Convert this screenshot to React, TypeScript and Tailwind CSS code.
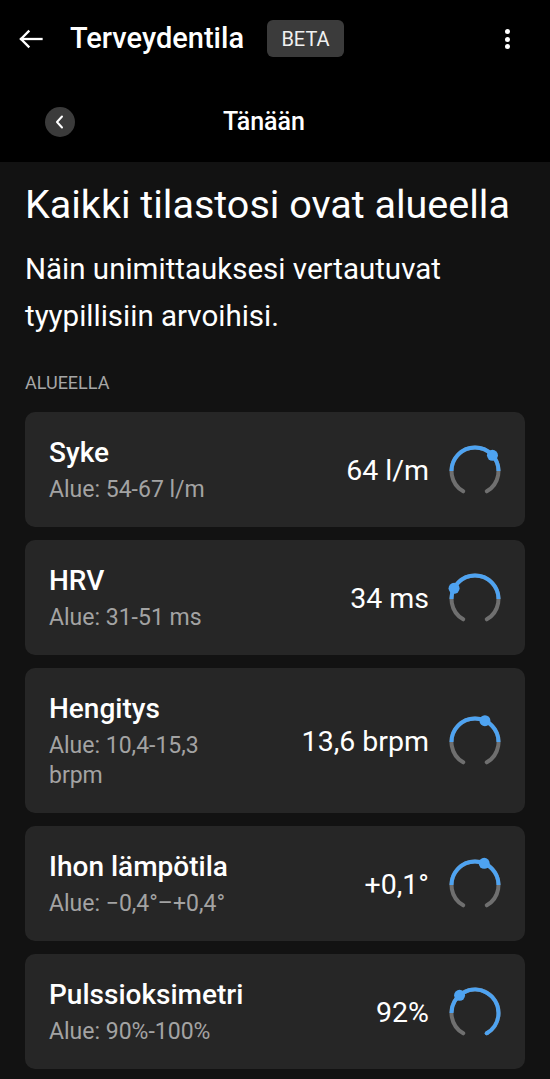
import React from "react";

const BLUE = "#4ea3f1";
const GRAY = "#6f6f6f";

function pt(a: number, r: number, c = 28) {
  const rad = (a * Math.PI) / 180;
  return [c + r * Math.sin(rad), c - r * Math.cos(rad)];
}

function arc(a1: number, a2: number, r: number) {
  const [x1, y1] = pt(a1, r);
  const [x2, y2] = pt(a2, r);
  const large = a2 - a1 > 180 ? 1 : 0;
  return `M ${x1} ${y1} A ${r} ${r} 0 ${large} 1 ${x2} ${y2}`;
}

function Gauge({ from, to, dot }: { from: number; to: number; dot: number }) {
  const r = 23.5;
  const [dx, dy] = pt(dot, r);
  const [ex, ey] = pt(to, r);
  return (
    <svg width="56" height="56" viewBox="0 0 56 56" className="shrink-0">
      <path d={arc(-150, 150, r)} fill="none" stroke={GRAY} strokeWidth="4" strokeLinecap="round" />
      <path d={arc(from, to, r)} fill="none" stroke={BLUE} strokeWidth="4" strokeLinecap="butt" />
      {to >= 150 && <circle cx={ex} cy={ey} r="2" fill={BLUE} />}
      <circle cx={dx} cy={dy} r="5.5" fill={BLUE} />
    </svg>
  );
}

const items = [
  { title: "Syke", range: "Alue: 54-67 l/m", value: "64 l/m", from: -90, to: 90, dot: 48 },
  { title: "HRV", range: "Alue: 31-51 ms", value: "34 ms", from: -90, to: 90, dot: -63 },
  { title: "Hengitys", range: "Alue: 10,4-15,3 brpm", value: "13,6 brpm", from: -90, to: 90, dot: 25 },
  { title: "Ihon lämpötila", range: "Alue: −0,4°–+0,4°", value: "+0,1°", from: -90, to: 90, dot: 23 },
  { title: "Pulssioksimetri", range: "Alue: 90%-100%", value: "92%", from: -90, to: 150, dot: -41 },
];

export default function App() {
  return (
    <div
      className="w-[550px] min-h-[1079px] bg-[#121212] text-white overflow-hidden"
      style={{ fontFamily: "Roboto, 'Noto Sans', Arial, sans-serif" }}
    >
      <div className="bg-black h-[162px] flex flex-col">
        <div className="h-[77px] flex items-center pl-[18px] pr-[40px]">
          <svg width="25" height="20" viewBox="0 0 25 20" fill="none" stroke="white" strokeWidth="2.3" strokeLinecap="square">
            <path d="M23.5 10 H3" />
            <path d="M10.5 2.5 L3 10 L10.5 17.5" />
          </svg>
          <span className="ml-[27px] text-[29px] font-medium leading-none">Terveydentila</span>
          <span className="ml-[23px] h-[37px] w-[77px] rounded-[6px] bg-[#3b3b3b] flex items-center justify-center text-[20px] leading-none text-[#f0f0f0]">
            BETA
          </span>
          <div className="ml-auto flex flex-col items-center gap-[2.5px] pt-[1px]">
            <span className="w-[5px] h-[5px] rounded-full bg-white" />
            <span className="w-[5px] h-[5px] rounded-full bg-white" />
            <span className="w-[5px] h-[5px] rounded-full bg-white" />
          </div>
        </div>
        <div className="relative h-[85px] flex items-center justify-center pr-[22px]">
          <div className="absolute left-[45px] top-[30px] w-[30px] h-[30px] rounded-full bg-[#3b3b3b] flex items-center justify-center">
            <svg width="12" height="16" viewBox="0 0 12 16" fill="none" stroke="white" strokeWidth="2" strokeLinecap="round" strokeLinejoin="round">
              <path d="M8 2.5 L3 8 L8 13.5" />
            </svg>
          </div>
          <span className="text-[25px] font-medium leading-none mt-[3px]">Tänään</span>
        </div>
      </div>

      <div className="px-[25px] pt-[19px]">
        <h1 className="text-[39.5px] leading-[48px] font-normal whitespace-nowrap">Kaikki tilastosi ovat alueella</h1>
        <p className="mt-[17px] text-[29.5px] leading-[47px] w-[470px]">Näin unimittauksesi vertautuvat tyypillisiin arvoihisi.</p>
        <div className="mt-[33px] text-[18px] leading-[20px] text-[#a6a6a6]">ALUEELLA</div>

        <div className="mt-[19px] flex flex-col gap-[13px]">
          {items.map((it) => (
            <div key={it.title} className="rounded-[10px] bg-[#262626] flex items-center pl-[24px] pr-[22px] pt-[25px] pb-[22px]">
              <div className="flex-1 min-w-0">
                <div className="text-[28px] leading-[32px] font-medium">{it.title}</div>
                <div className="mt-[6px] text-[23px] leading-[30px] text-[#a3a3a3]">{it.range}</div>
              </div>
              <div className="ml-[60px] text-[28.5px] leading-none whitespace-nowrap">{it.value}</div>
              <div className="ml-[18px]">
                <Gauge from={it.from} to={it.to} dot={it.dot} />
              </div>
            </div>
          ))}
        </div>
      </div>
    </div>
  );
}
